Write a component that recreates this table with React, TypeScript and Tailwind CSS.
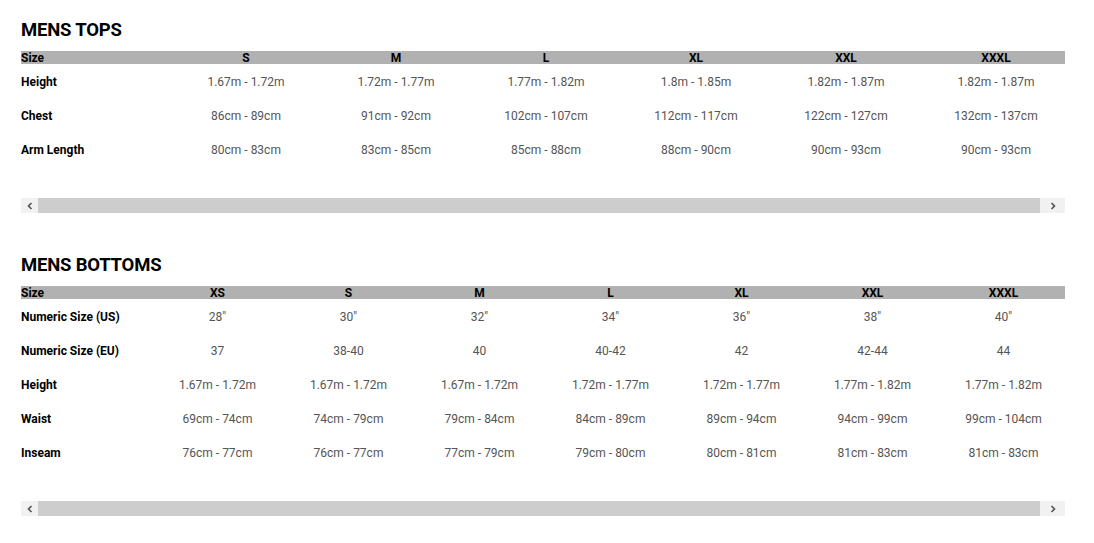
import React from 'react'

interface SizeTable {
  title: string
  sizes: string[]
  rows: { label: string; values: string[] }[]
  colWidth: string
}

const tables: SizeTable[] = [
  {
    title: 'MENS TOPS',
    sizes: ['S', 'M', 'L', 'XL', 'XXL', 'XXXL'],
    colWidth: 'w-[150px] min-w-[150px]',
    rows: [
      { label: 'Height', values: ['1.67m - 1.72m', '1.72m - 1.77m', '1.77m - 1.82m', '1.8m - 1.85m', '1.82m - 1.87m', '1.82m - 1.87m'] },
      { label: 'Chest', values: ['86cm - 89cm', '91cm - 92cm', '102cm - 107cm', '112cm - 117cm', '122cm - 127cm', '132cm - 137cm'] },
      { label: 'Arm Length', values: ['80cm - 83cm', '83cm - 85cm', '85cm - 88cm', '88cm - 90cm', '90cm - 93cm', '90cm - 93cm'] },
    ],
  },
  {
    title: 'MENS BOTTOMS',
    sizes: ['XS', 'S', 'M', 'L', 'XL', 'XXL', 'XXXL'],
    colWidth: 'w-[131px] min-w-[131px]',
    rows: [
      { label: 'Numeric Size (US)', values: ['28"', '30"', '32"', '34"', '36"', '38"', '40"'] },
      { label: 'Numeric Size (EU)', values: ['37', '38-40', '40', '40-42', '42', '42-44', '44'] },
      { label: 'Height', values: ['1.67m - 1.72m', '1.67m - 1.72m', '1.67m - 1.72m', '1.72m - 1.77m', '1.72m - 1.77m', '1.77m - 1.82m', '1.77m - 1.82m'] },
      { label: 'Waist', values: ['69cm - 74cm', '74cm - 79cm', '79cm - 84cm', '84cm - 89cm', '89cm - 94cm', '94cm - 99cm', '99cm - 104cm'] },
      { label: 'Inseam', values: ['76cm - 77cm', '76cm - 77cm', '77cm - 79cm', '79cm - 80cm', '80cm - 81cm', '81cm - 83cm', '81cm - 83cm'] },
    ],
  },
]

function ScrollBar() {
  return (
    <div className="flex h-[15px] w-full">
      <div className="flex w-[17px] items-center justify-center bg-[#f1f1f1]">
        <svg width="6" height="8" viewBox="0 0 6 8">
          <path d="M4.5 1 L1.5 4 L4.5 7" fill="none" stroke="#505050" strokeWidth="1.6" />
        </svg>
      </div>
      <div className="flex-1 bg-[#cdcdcd]" />
      <div className="flex w-[25px] items-center justify-center bg-[#f1f1f1]">
        <svg width="6" height="8" viewBox="0 0 6 8">
          <path d="M1.5 1 L4.5 4 L1.5 7" fill="none" stroke="#505050" strokeWidth="1.6" />
        </svg>
      </div>
    </div>
  )
}

function SizeChart({ table }: { table: SizeTable }) {
  return (
    <div>
      <h2 className="text-[18.5px] leading-[24px] font-bold text-black tracking-[-0.2px]">{table.title}</h2>
      <div className="mt-[9px] overflow-hidden">
        {/* Header row */}
        <div className="flex h-[13px] w-max bg-[#b1b1b1] pt-[1px] text-[12px] leading-[13px] font-bold text-black">
          <div className={`${table.colWidth}`}>Size</div>
          {table.sizes.map((s) => (
            <div key={s} className={`${table.colWidth} text-center`}>{s}</div>
          ))}
        </div>
        {table.rows.map((row) => (
          <div key={row.label} className="flex h-[34px] w-max items-center pt-[2px] text-[12px]">
            <div className={`${table.colWidth} font-bold text-black`}>{row.label}</div>
            {row.values.map((v, i) => (
              <div key={i} className={`${table.colWidth} text-center text-[#555555]`}>{v}</div>
            ))}
          </div>
        ))}
      </div>
      <div className="mt-[32px]">
        <ScrollBar />
      </div>
    </div>
  )
}

export default function App() {
  return (
    <div className="min-h-[543px] bg-white pl-[21px] pr-[29px] pt-[18px]" style={{ fontFamily: 'Roboto, "Liberation Sans", sans-serif' }}>
      <div className="flex flex-col gap-[40px]">
        {tables.map((t) => (
          <SizeChart key={t.title} table={t} />
        ))}
      </div>
    </div>
  )
}
